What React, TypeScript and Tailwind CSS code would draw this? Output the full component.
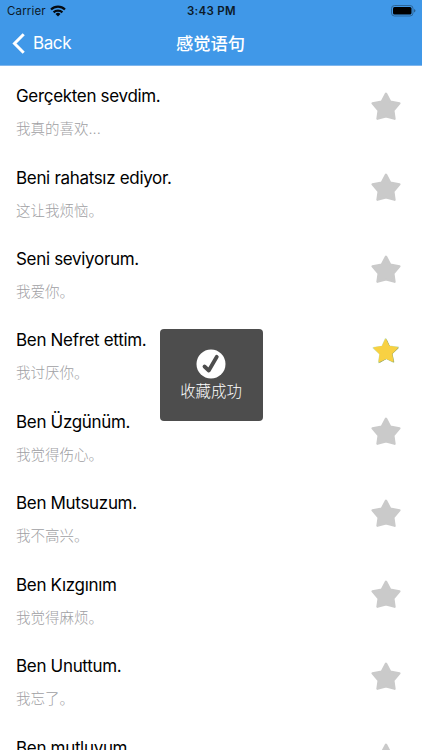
const phrases = [
  { text: "Gerçekten sevdim.", translation: "我真的喜欢...", starred: false },
  { text: "Beni rahatsız ediyor.", translation: "这让我烦恼。", starred: false },
  { text: "Seni seviyorum.", translation: "我爱你。", starred: false },
  { text: "Ben Nefret ettim.", translation: "我讨厌你。", starred: true },
  { text: "Ben Üzgünüm.", translation: "我觉得伤心。", starred: false },
  { text: "Ben Mutsuzum.", translation: "我不高兴。", starred: false },
  { text: "Ben Kızgınım", translation: "我觉得麻烦。", starred: false },
  { text: "Ben Unuttum.", translation: "我忘了。", starred: false },
  { text: "Ben mutluyum.", translation: "我很幸福。", starred: false },
];

function Star({ starred }: { starred: boolean }) {
  if (starred) {
    return (
      <svg viewBox="0 0 32 32" className="h-8 w-8" strokeLinejoin="round">
        <path d="M15.6 4l3.4 7.3 9 1.2-6.4 6 1.9 8.4-7.4-3.6-7.2 4 1.3-8.5-6.7-6 8.7-1.2z" fill="#c8e4bd" stroke="#c8e4bd" strokeWidth="1.8" />
        <path d="M16.4 4.8l3.4 7.2 8.4 1-6.2 6 1.6 7.9-7-3.5-7 4z" fill="#98a66e" stroke="#98a66e" strokeWidth="1" />
        <path d="M15.6 4.8l3.2 6.6 8.3 1.4-5.8 5.9 1.5 7.4-6.7-3.1-6.8 3.4 1-7.5-6-6 8.2-1.3z" fill="#f8d143" stroke="#f8d143" strokeWidth="1.5" />
      </svg>
    );
  }
  return (
    <svg viewBox="0 0 32 32" className="h-8 w-8">
      <path d="M16 2.6l4.2 7.9 9.3 1.9-6.1 7.1 1.2 8.3-8.6-2.4-8.6 2.4 1.2-8.3-6.1-7.1 9.3-1.9z" fill="#cacaca" stroke="#cacaca" strokeWidth="2.2" strokeLinejoin="round" />
    </svg>
  );
}

export default function App() {
  return (
    <div className="relative h-[750px] w-[422px] overflow-hidden bg-white font-['Inter','Noto_Sans_CJK_SC',sans-serif]">
      <header className="h-[66px] border-b border-[#7fb6ed] bg-[#4098e8]">
        {/* Status bar */}
        <div className="grid h-[22px] grid-cols-3 items-center pl-[7px] pr-1.5 text-[11.5px] text-[#0c1a28]">
          <div className="flex items-center gap-1">
            <span className="pt-0.5 tracking-[0.15px]">Carrier</span>
            <svg viewBox="0 0 16 12" className="h-3 w-4" fill="none" stroke="#050b12" strokeWidth="2.2">
              <path d="M1 4.5a10 10 0 0 1 14 0M3.6 7.4a6.3 6.3 0 0 1 8.8 0" />
              <path d="M8 11.5L5.5 9a3.6 3.6 0 0 1 5 0z" fill="#050b12" stroke="none" />
            </svg>
          </div>
          <span className="pt-0.5 text-center font-semibold tracking-[0.3px]">3:43 PM</span>
          <svg viewBox="0 0 25 12" className="h-3 w-[25px] justify-self-end">
            <rect x="0.5" y="0.5" width="21.5" height="10.5" rx="3" fill="none" stroke="#2d6699" />
            <rect x="2" y="2" width="18.5" height="7.5" rx="1.5" fill="#000" />
            <path d="M23.2 4v3.5q1.2-.4 1.2-1.75T23.2 4z" fill="#24547f" />
          </svg>
        </div>
        {/* Navigation */}
        <div className="grid h-[43px] grid-cols-[1fr_auto_1fr] items-center pl-3 pr-[13px] text-[17px] text-white">
          <div className="flex items-center gap-2">
            <svg viewBox="0 0 13 21" className="h-[21px] w-[13px]" fill="none" stroke="white" strokeWidth="3">
              <path d="M11.7 1.2l-9.2 9.3 9.2 9.3" />
            </svg>
            <span className="tracking-[-0.4px]">Back</span>
          </div>
          <h1 className="text-[17.3px] font-medium">感觉语句</h1>
        </div>
      </header>

      <main>
        {phrases.map((phrase) => (
          <div key={phrase.text} className="flex h-[81.43px] items-center justify-between pl-4 pr-5">
            <div className="pt-2.5">
              <p className="text-[17px] leading-6 tracking-[-0.32px] text-black">{phrase.text}</p>
              <p className="mt-[11px] text-[14.5px] leading-5 font-light text-[#a0a0a3]">{phrase.translation}</p>
            </div>
            <Star starred={phrase.starred} />
          </div>
        ))}
      </main>

      {/* Toast */}
      <div className="absolute left-[159.5px] top-[329px] flex h-[92px] w-[103px] flex-col items-center rounded bg-[#4d4d4d] pt-5 text-white">
        <svg viewBox="0 0 30 30" className="h-[30px] w-[30px]">
          <circle cx="15" cy="15" r="14.5" fill="white" />
          <path d="M8.5 17.5l4.3 4L20.8 7.8" fill="none" stroke="#4d4d4d" strokeWidth="3.8" strokeLinecap="round" strokeLinejoin="round" />
        </svg>
        <p className="text-[15.4px] leading-[25px] font-light">收藏成功</p>
      </div>
    </div>
  );
}
